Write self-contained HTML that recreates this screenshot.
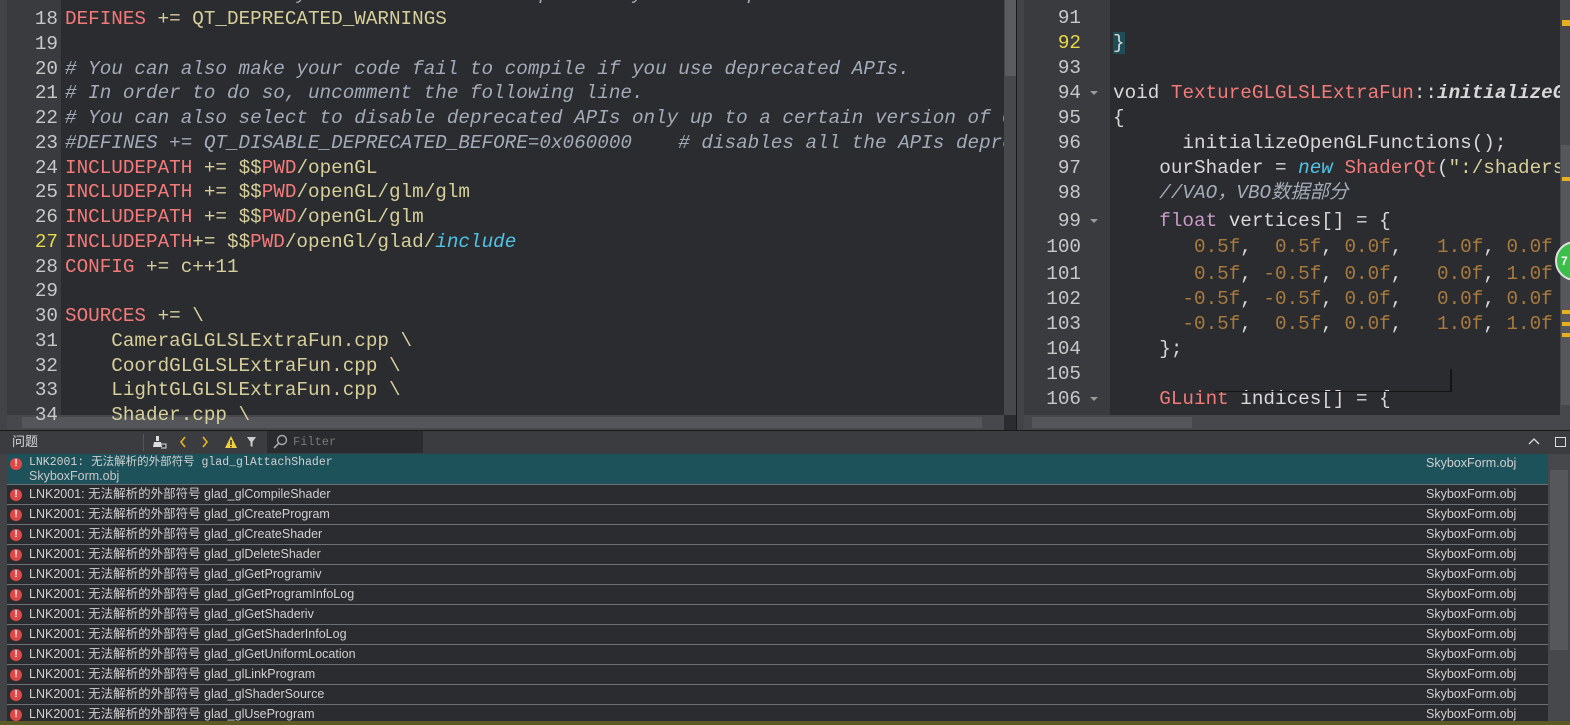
<!DOCTYPE html><html><head><meta charset="utf-8"><style>
*{margin:0;padding:0;box-sizing:border-box}
body{width:1570px;height:725px;overflow:hidden;background:#2b2c2f;position:relative;font-family:"Liberation Mono",monospace}
.a{position:absolute}
.ln{position:absolute;font:19.3px/24px "Liberation Mono","Noto Sans CJK SC",monospace;color:#c8c8c8;white-space:pre;text-align:right}
.cd{position:absolute;font:19.3px/24px "Liberation Mono","Noto Sans CJK SC",monospace;color:#d6cf9a;white-space:pre}
.r{color:#f47a7a}.c{color:#a3abb8;font-style:italic}.n{color:#a87a3e}.w{color:#d8d8d8}.b{color:#4fc3e6;font-style:italic}.p{color:#c89ac8}
.row{position:absolute;left:7px;width:1541px;height:20px;border-bottom:1px solid #6c6f73;font:12.5px/19px "Liberation Sans","Noto Sans CJK SC",sans-serif;color:#d0d0d0;white-space:pre}
.row .t{position:absolute;left:22px;top:0}
.row .f{position:absolute;left:1419px;top:0}
.ic{position:absolute;left:3px;top:4px;width:12px;height:12px;border-radius:50%;background:#e04848;color:#fff;font:bold 10px/12px "Liberation Sans",sans-serif;text-align:center}
</style></head><body>
<!-- left editor -->
<div class="a" style="left:0;top:0;width:7px;height:430px;background:#414347"></div>
<div class="a" style="left:7px;top:0;width:54px;height:415px;background:#393b3f"></div>
<div class="a" style="left:61px;top:0;width:943px;height:415px;background:#2b2c2f"></div>
<div class="a" style="left:1004px;top:0;width:13px;height:415px;background:#46484c"></div>
<div class="a" style="left:1005px;top:0;width:11px;height:76px;background:#5a5c60"></div>
<div class="a" style="left:1016px;top:0;width:1px;height:430px;background:#1a1a1a"></div>
<div class="a" style="left:7px;top:415px;width:997px;height:15px;background:#46484c"></div>
<div class="a" style="left:22px;top:417px;width:960px;height:11px;background:#54565a"></div>
<div class="a" style="left:0;top:430px;width:1570px;height:1px;background:#1a1a1a"></div>
<div id="L"></div>
<!-- right editor -->
<div class="a" style="left:1017px;top:0;width:7px;height:430px;background:#414347"></div>
<div class="a" style="left:1024px;top:0;width:86px;height:415px;background:#393b3f"></div>
<div class="a" style="left:1110px;top:0;width:450px;height:415px;background:#2b2c2f"></div>
<div class="a" style="left:1560px;top:0;width:10px;height:430px;background:#46484c"></div>
<div class="a" style="left:1561px;top:145px;width:9px;height:260px;background:#55575b"></div>
<div class="a" style="left:1024px;top:415px;width:536px;height:15px;background:#46484c"></div>
<div class="a" style="left:1032px;top:417px;width:160px;height:11px;background:#54565a"></div>
<div class="a" style="left:1562px;top:20px;width:8px;height:6px;background:#e8b020"></div>
<div class="a" style="left:1562px;top:177px;width:8px;height:4px;background:#e8b020"></div>
<div class="a" style="left:1562px;top:310px;width:8px;height:4px;background:#e8b020"></div>
<div class="a" style="left:1562px;top:322px;width:8px;height:4px;background:#e8b020"></div>
<div class="a" style="left:1562px;top:333px;width:8px;height:4px;background:#e8b020"></div>
<div id="R"></div>
<div class="a" style="left:1555px;top:241px;width:40px;height:40px;border-radius:50%;background:#3cbf4a;border:2px solid #e0e0e0;color:#fff;font:bold 12px/36px 'Liberation Sans';padding-left:4px">7</div>
<div class="a" style="left:1215px;top:391px;width:236px;height:1px;background:#151515"></div>
<div class="a" style="left:1450px;top:369px;width:2px;height:23px;background:#151515"></div>
<!-- problems header -->
<div class="a" style="left:0;top:431px;width:1570px;height:23px;background:#3a3c40"></div>
<div class="a" style="left:12px;top:434px;font:13px/16px 'Liberation Sans','Noto Sans CJK SC',sans-serif;color:#d8d8d8">问题</div>
<div class="a" style="left:143px;top:434px;width:1px;height:17px;background:#555"></div>
<svg class="a" style="left:152px;top:434px" width="16" height="16"><rect x="4" y="2" width="3" height="5" fill="#ddd"/><path d="M2 8 H9 L10 13 H1Z" fill="#ddd"/><path d="M9 10 H14 V14 H9" stroke="#ddd" fill="none"/></svg>
<svg class="a" style="left:176px;top:434px" width="80" height="16"><path d="M9 3 L5 8 L9 13" stroke="#e6b422" stroke-width="1.6" fill="none"/><path d="M27 3 L31 8 L27 13" stroke="#e6b422" stroke-width="1.6" fill="none"/><path d="M55 2 L61 14 L49 14Z" fill="#f0d040"/><rect x="54.3" y="6" width="1.4" height="5" fill="#222"/><rect x="54.3" y="12" width="1.4" height="1.3" fill="#222"/><path d="M71 3 H80 L76.5 8 V13 L74.5 12 V8Z" fill="#ccc"/></svg>
<div class="a" style="left:267px;top:431px;width:156px;height:22px;background:#2b2c2f"></div>
<svg class="a" style="left:272px;top:434px" width="18" height="16"><circle cx="10" cy="6" r="4.5" stroke="#aaa" stroke-width="1.4" fill="none"/><path d="M7 9 L2 14" stroke="#aaa" stroke-width="1.6"/></svg>
<div class="a" style="left:293px;top:435px;font:12px/14px 'Liberation Mono';color:#777">Filter</div>
<svg class="a" style="left:1528px;top:437px" width="12" height="8"><path d="M1 7 L6 2 L11 7" stroke="#ddd" stroke-width="1.3" fill="none"/></svg>
<div class="a" style="left:1555px;top:437px;width:11px;height:10px;border:1px solid #ddd"></div>
<!-- list -->
<div class="a" style="left:0;top:454px;width:7px;height:271px;background:#414347"></div>
<div class="a" style="left:7px;top:454px;width:1541px;height:271px;background:#2b2c2f"></div>
<div class="a" style="left:1548px;top:454px;width:22px;height:271px;background:#46484c"></div>
<div class="a" style="left:1550px;top:470px;width:18px;height:180px;background:#55575b"></div>
<div class="row" style="top:454px;height:31px;background:#1e525b"><div class="ic">!</div><div class="t" style="font-family:'Liberation Mono','Noto Sans CJK SC',monospace;font-size:11.5px;top:1px;line-height:15px">LNK2001: 无法解析的外部符号 glad_glAttachShader</div><div class="t" style="top:15px;line-height:14px;color:#c8c8c8">SkyboxForm.obj</div><div class="f">SkyboxForm.obj</div></div>
<div id="P"></div>
<div class="a" style="left:0;top:721px;width:1570px;height:4px;background:#5b5a26"></div>
<script>
var L=[
[17,'<span class="c"># You can also make your code fail to compile if you use deprecated APIs.</span>'],
[18,'<span class="r">DEFINES</span> += QT_DEPRECATED_WARNINGS'],[19,''],
[20,'<span class="c"># You can also make your code fail to compile if you use deprecated APIs.</span>'],
[21,'<span class="c"># In order to do so, uncomment the following line.</span>'],
[22,'<span class="c"># You can also select to disable deprecated APIs only up to a certain version of Qt.</span>'],
[23,'<span class="c">#DEFINES += QT_DISABLE_DEPRECATED_BEFORE=0x060000    # disables all the APIs deprecated</span>'],
[24,'<span class="r">INCLUDEPATH</span> += $$<span class="r">PWD</span>/openGL'],
[25,'<span class="r">INCLUDEPATH</span> += $$<span class="r">PWD</span>/openGL/glm/glm'],
[26,'<span class="r">INCLUDEPATH</span> += $$<span class="r">PWD</span>/openGL/glm'],
[27,'<span class="r">INCLUDEPATH</span>+= $$<span class="r">PWD</span>/openGl/glad/<span class="b">include</span>'],
[28,'<span class="r">CONFIG</span> += c++11'],[29,''],
[30,'<span class="r">SOURCES</span> += \\'],
[31,'    CameraGLGLSLExtraFun.cpp \\'],[32,'    CoordGLGLSLExtraFun.cpp \\'],[33,'    LightGLGLSLExtraFun.cpp \\'],[34,'    Shader.cpp \\']];
var h='';L.forEach(function(l){var t=7+(l[0]-18)*24.75;
h+='<div class="ln" style="left:7px;width:51px;top:'+t+'px;'+(l[0]==27?'color:#e8d84a':'')+'">'+l[0]+'</div><div class="cd" style="left:65px;top:'+t+'px;width:939px;overflow:hidden">'+l[1]+'</div>';});
document.getElementById('L').innerHTML=h;
var R=[[91,6,''],[92,31,'<span class="w" style="background:#1f4d55">}</span>'],[93,56,''],
[94,81,'<span class="w">void</span> <span class="r">TextureGLGLSLExtraFun</span><span class="w">::</span><i class="w" style="font-weight:bold">initializeGL</i>'],
[95,106,'<span class="w">{</span>'],[96,131,'<span class="w">      initializeOpenGLFunctions();</span>'],
[97,156,'<span class="w">    ourShader = </span><span class="b">new</span> <span class="r">ShaderQt</span><span class="w">(</span>":/shaders'],
[98,181,'<span class="c">    //VAO，VBO数据部分</span>'],
[99,209,'<span class="p">    float</span><span class="w"> vertices[] = {</span>'],
[100,235,'<span class="n">       0.5f</span><span class="w">,</span><span class="n">  0.5f</span><span class="w">,</span><span class="n"> 0.0f</span><span class="w">,</span><span class="n">   1.0f</span><span class="w">,</span><span class="n"> 0.0f</span>'],
[101,262,'<span class="n">       0.5f</span><span class="w">,</span><span class="n"> -0.5f</span><span class="w">,</span><span class="n"> 0.0f</span><span class="w">,</span><span class="n">   0.0f</span><span class="w">,</span><span class="n"> 1.0f</span>'],
[102,287,'<span class="n">      -0.5f</span><span class="w">,</span><span class="n"> -0.5f</span><span class="w">,</span><span class="n"> 0.0f</span><span class="w">,</span><span class="n">   0.0f</span><span class="w">,</span><span class="n"> 0.0f</span>'],
[103,312,'<span class="n">      -0.5f</span><span class="w">,</span><span class="n">  0.5f</span><span class="w">,</span><span class="n"> 0.0f</span><span class="w">,</span><span class="n">   1.0f</span><span class="w">,</span><span class="n"> 1.0f</span>'],
[104,337,'<span class="w">    };</span>'],[105,362,''],
[106,387,'<span class="r">    GLuint</span><span class="w"> indices[] = {</span>']];
h='';R.forEach(function(l){
h+='<div class="ln" style="left:1024px;width:57px;top:'+l[1]+'px;'+(l[0]==92?'color:#e8d84a':'')+'">'+l[0]+'</div>'+([94,99,106].indexOf(l[0])>=0?'<div class="a" style="left:1090px;top:'+(l[1]+10)+'px;border:4px solid transparent;border-top:4px solid #999"></div>':'')+'<div class="cd" style="left:1113px;top:'+l[1]+'px;width:447px;overflow:hidden">'+l[2]+'</div>';});
document.getElementById('R').innerHTML=h;
var P=['glCompileShader','glCreateProgram','glCreateShader','glDeleteShader','glGetProgramiv','glGetProgramInfoLog','glGetShaderiv','glGetShaderInfoLog','glGetUniformLocation','glLinkProgram','glShaderSource','glUseProgram'];
h='';P.forEach(function(p,i){h+='<div class="row" style="top:'+(485+i*20)+'px"><div class="ic">!</div><div class="t">LNK2001: 无法解析的外部符号 glad_'+p+'</div><div class="f">SkyboxForm.obj</div></div>';});
document.getElementById('P').innerHTML=h;
</script>
</body></html>
